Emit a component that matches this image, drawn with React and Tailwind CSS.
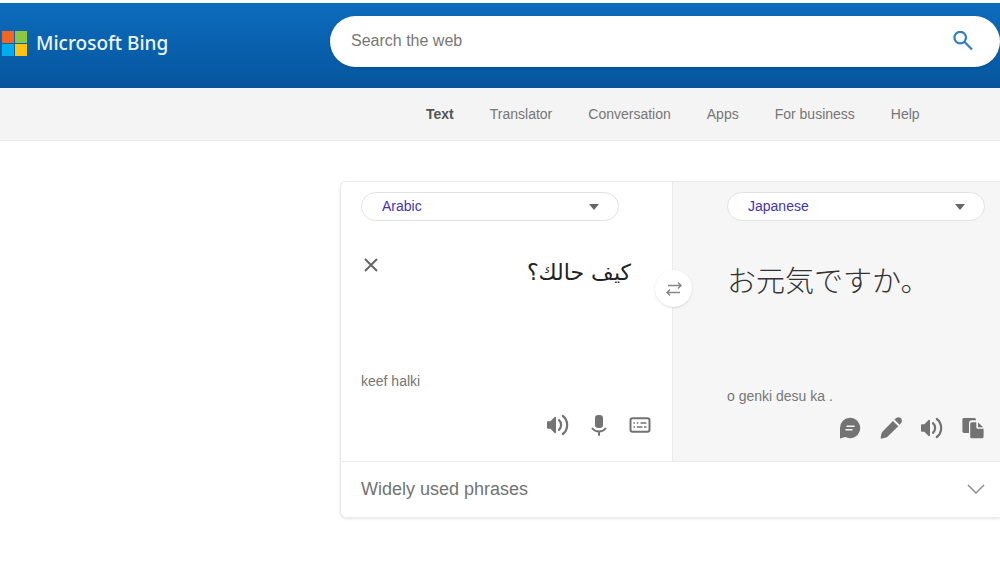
import React, { useState } from "react";

const NAV_ITEMS = ["Text", "Translator", "Conversation", "Apps", "For business", "Help"];
const LANGUAGES = ["Arabic", "English", "French", "Japanese", "Spanish"];

// Icons
const SearchIcon = () => (
  <svg className="h-5 w-5" viewBox="0 0 20 20" fill="none" stroke="#2f7fc6" strokeWidth="2.2">
    <circle cx="7.2" cy="6.6" r="5.8" />
    <path d="M11.3 10.8L19 18.5" />
  </svg>
);

const SpeakerIcon = () => (
  <svg className="h-6 w-6" viewBox="0 0 24 24">
    <path d="M1 9.5C1 8.7 1.5 8.2 2.2 8.2H4.4L8.6 4.1C9.2 3.5 10 3.8 10 4.7V19.3C10 20.2 9.2 20.5 8.6 19.9L4.4 15.8H2.2C1.5 15.8 1 15.3 1 14.5Z" fill="currentColor" />
    <path d="M13 7.2C15.8 9.6 15.8 14.4 13 16.8" fill="none" stroke="currentColor" strokeWidth="2.2" strokeLinecap="round" />
    <path d="M16.8 3C22.6 7.4 22.6 16.6 16.8 21" fill="none" stroke="currentColor" strokeWidth="2.2" strokeLinecap="round" />
  </svg>
);

const MicIcon = () => (
  <svg className="h-6 w-6" viewBox="0 0 24 24">
    <rect x="8" y="2" width="8" height="13" rx="3.2" fill="currentColor" />
    <path d="M5.5 15.5C8.5 19.5 15.5 19.5 18.5 15.5M12 18.5V22" fill="none" stroke="currentColor" strokeWidth="2" strokeLinecap="round" />
  </svg>
);

const KeyboardIcon = () => (
  <svg className="h-6 w-6" viewBox="0 0 24 24" fill="none" stroke="currentColor">
    <rect x="2.5" y="5.2" width="19" height="13.6" rx="2" strokeWidth="2" />
    <path d="M5.5 10H7M8.8 10H10.3M12.5 10H18.5M5.5 14H7M8.8 14H14.5M16 14H18.5" strokeWidth="1.6" />
  </svg>
);

const FeedbackIcon = () => (
  <svg className="h-6 w-6" viewBox="0 0 24 24">
    <path d="M12 1.8A10.2 10.2 0 1 1 7.4 21.1L2 22.4V12A10.2 10.2 0 0 1 12 1.8Z" fill="currentColor" />
    <path d="M9 10.2H16M8 13.8H14" stroke="#f6f6f6" strokeWidth="1.5" strokeLinecap="round" />
  </svg>
);

const PencilIcon = () => (
  <svg className="h-6 w-6" viewBox="0 0 24 24" fill="currentColor">
    <path d="M13.9 4.9L19.3 10.3L8.2 21C7.2 21.9 3.6 22.4 1.6 22.6C1.9 20.3 2.3 17 3.2 16Z" />
    <path d="M15.4 3.6L17.3 2C18.9 0.9 20.6 1 21.9 2.3C23.2 3.6 23.3 5.3 22.1 6.9L20.6 8.8Z" />
  </svg>
);

const CopyIcon = () => (
  <svg className="h-6 w-6" viewBox="0 0 24 24" fill="currentColor">
    <path d="M3 2H13.5C14.5 2 15 2.8 15 4.3H11C8.8 4.3 8 5.4 8 7.2V17H3.2C2 17 1.4 16.3 1.4 15.3V3.6C1.4 2.6 2 2 3 2Z" />
    <path d="M10.8 6.2H15.3V11.3C15.3 12.2 15.8 12.8 16.8 12.8H22.6V20.4C22.6 21.5 22 22.2 20.8 22.2H10.8C9.8 22.2 9.2 21.5 9.2 20.4V8C9.2 6.9 9.8 6.2 10.8 6.2Z" />
    <path d="M17 6.5L22.3 11.3H17Z" />
  </svg>
);

const IconButton = ({ label, children }) => (
  <button type="button" aria-label={label} className="text-[#737373]">
    {children}
  </button>
);

const LanguageSelect = ({ label, value, onChange }) => (
  <div className="relative w-[258px]">
    <select
      aria-label={label}
      value={value}
      onChange={(e) => onChange(e.target.value)}
      className="block h-[29px] w-full appearance-none rounded-full border border-[#e2e2e2] bg-white pr-10 pb-0.5 pl-5 text-sm leading-5 text-[#4433b8]"
    >
      {LANGUAGES.map((language) => (
        <option key={language}>{language}</option>
      ))}
    </select>
    <svg className="pointer-events-none absolute top-3 right-5 h-1.5 w-2.5" viewBox="0 0 10 6">
      <path d="M0 0H10L5 6Z" fill="#666666" />
    </svg>
  </div>
);

const Header = () => (
  <header className="mt-[3px] flex h-[85px] items-start bg-linear-to-b from-[#0d6cbe] to-[#06559d]">
    <a href="#home" className="flex w-[330px] shrink-0 items-center gap-2 pt-[26px] pl-0.5">
      <svg className="h-[26px] w-[26px]" viewBox="0 0 26 26">
        <path d="M0 1H12V13H0Z" fill="#f26522" />
        <path d="M13 1H25V13H13Z" fill="#8dc63f" />
        <path d="M0 14H12V26H0Z" fill="#00aeef" />
        <path d="M13 14H25V26H13Z" fill="#ffc20e" />
      </svg>
      <span className="font-['Noto_Sans',sans-serif] text-[19px] leading-7 font-medium text-[#eaf5ff]">Microsoft Bing</span>
    </a>
    <form
      role="search"
      onSubmit={(e) => e.preventDefault()}
      className="mt-[13px] flex h-[51px] flex-1 items-center rounded-full bg-white pr-[27px] pb-px pl-[21px] shadow"
    >
      <input
        type="search"
        aria-label="Search the web"
        placeholder="Search the web"
        className="min-w-0 flex-1 text-base leading-6 outline-none placeholder:text-[#777777]"
      />
      <button type="submit" aria-label="Search">
        <SearchIcon />
      </button>
    </form>
  </header>
);

const Nav = () => (
  <nav className="flex h-[53px] items-center gap-9 border-b border-[#ebebeb] bg-[#f4f4f4] pl-[426px] text-sm text-[#767676]">
    {NAV_ITEMS.map((item, index) => (
      <a
        key={item}
        href="#nav"
        className={index === 0 ? "font-bold text-[#555555]" : "whitespace-nowrap"}
      >
        {item}
      </a>
    ))}
  </nav>
);

const App = () => {
  const [source, setSource] = useState("Arabic");
  const [target, setTarget] = useState("Japanese");

  const handleSwap = () => {
    setSource(target);
    setTarget(source);
  };

  return (
    <div className="flow-root bg-white font-['Liberation_Sans',Arial,sans-serif]">
      <Header />
      <Nav />
      <main className="pt-10 pb-11 pl-[340px]">
        <div className="rounded-l-md border-y border-l border-[#ebebeb] shadow-[0_1px_3px_#0000001c]">
          <div className="relative grid h-[279px] grid-cols-[332fr_327fr]">
            {/* Source text */}
            <section className="flex flex-col pt-2.5 pr-5 pb-6 pl-5">
              <LanguageSelect label="Source language" value={source} onChange={setSource} />
              <div className="mt-8 flex items-start justify-between pr-[21px]">
                <button type="button" aria-label="Clear text" className="mt-1 ml-0.5">
                  <svg className="h-4 w-4" viewBox="0 0 16 16" stroke="#666666" strokeWidth="2">
                    <path d="M2 2L14 14M14 2L2 14" />
                  </svg>
                </button>
                <p lang="ar" dir="rtl" className="font-['DejaVu_Sans',sans-serif] text-[22px] leading-10 text-[#222222]">
                  كيف حالك؟
                </p>
              </div>
              <p className="mt-auto text-sm leading-5 text-[#767676]">keef halki</p>
              <div className="mt-[22px] flex justify-end gap-[17px]">
                <IconButton label="Listen"><SpeakerIcon /></IconButton>
                <IconButton label="Speak"><MicIcon /></IconButton>
                <IconButton label="Keyboard"><KeyboardIcon /></IconButton>
              </div>
            </section>

            {/* Translation */}
            <section className="flex flex-col border-l border-[#ebebeb] bg-[#f6f6f6] pt-2.5 pr-[15px] pb-[21px] pl-[54px]">
              <LanguageSelect label="Target language" value={target} onChange={setTarget} />
              <p lang="ja" className="mt-[38px] font-['Noto_Sans_CJK_JP',sans-serif] text-[29px] leading-10 font-light text-[#333333]">
                お元気ですか。
              </p>
              <p className="mt-auto text-sm leading-5 text-[#767676]">o genki desu ka .</p>
              <div className="mt-2.5 flex justify-end gap-[17px]">
                <IconButton label="Feedback"><FeedbackIcon /></IconButton>
                <IconButton label="Suggest an edit"><PencilIcon /></IconButton>
                <IconButton label="Listen to translation"><SpeakerIcon /></IconButton>
                <IconButton label="Copy"><CopyIcon /></IconButton>
              </div>
            </section>

            <button
              type="button"
              aria-label="Swap languages"
              onClick={handleSwap}
              className="absolute top-[88px] left-[314px] flex h-[37px] w-[37px] items-center justify-center rounded-full bg-white shadow"
            >
              <svg className="h-4 w-4" viewBox="0 0 16 16" fill="none" stroke="#888888" strokeWidth="1.5">
                <path d="M2 4.5H15M12 1.5L15 4.5L12 7.5M14 11.5H1M4 8.5L1 11.5L4 14.5" />
              </svg>
            </button>
          </div>

          <button
            type="button"
            className="flex h-14 w-full items-center justify-between border-t border-[#ebebeb] pr-[15px] pb-0.5 pl-5 text-lg text-[#737373]"
          >
            Widely used phrases
            <svg className="h-[18px] w-[18px]" viewBox="0 0 18 18" fill="none" stroke="#888888" strokeWidth="1.4">
              <path d="M1 5L9 13L17 5" />
            </svg>
          </button>
        </div>
      </main>
    </div>
  );
};

export default App;
